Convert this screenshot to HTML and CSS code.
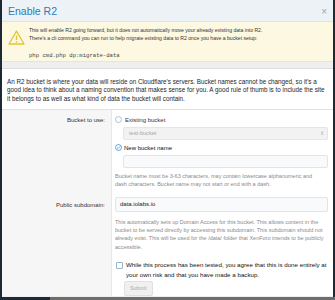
FILE: index.html
```html
<!DOCTYPE html>
<html lang="en">
<head>
    <meta charset="UTF-8">
    <title>Enable R2</title>
    <link rel="stylesheet" href="styles.css">
</head>
<body>
<div class="overlay">
    <div class="modal">
        <div class="modal-title">
            <span>Enable R2</span>
            <span class="close">&times;</span>
        </div>

        <div class="notice">
            <svg class="notice-icon" width="17" height="15" viewBox="0 0 17 15">
                <path d="M8.5 1.2 L16 14 L1 14 Z" fill="none" stroke="#e3c437" stroke-width="1.3" stroke-linejoin="round"/>
                <path d="M8.5 5.5 V10" stroke="#e3c437" stroke-width="1.4"/>
                <circle cx="8.5" cy="11.9" r="0.8" fill="#e3c437"/>
            </svg>
            <div class="notice-text">
                <p>This will enable R2 going forward, but it does not automatically move your already existing data into R2.<br>There's a cli command you can run to help migrate existing data to R2 once you have a bucket setup:</p>
                <code>php cmd.php dp:migrate-data</code>
            </div>
        </div>

        <div class="block">
            <p class="intro">An R2 bucket is where your data will reside on Cloudflare's servers. Bucket names cannot be changed, so it's a good idea to think about a naming convention that makes sense for you. A good rule of thumb is to include the site it belongs to as well as what kind of data the bucket will contain.</p>

            <div class="form-row">
                <div class="row-label">Bucket to use:</div>
                <div class="row-input">
                    <label class="choice">
                        <span class="radio"></span> Existing bucket
                    </label>
                    <div class="select">
                        <span>test-bucket</span>
                        <span class="arrows">&#8661;</span>
                    </div>
                    <label class="choice choice-on">
                        <svg class="radio-on" width="7" height="7" viewBox="0 0 7 7">
                            <circle cx="3.5" cy="3.5" r="3" fill="#fff" stroke="#3c8dd0" stroke-width="0.8"/>
                            <path d="M2 3.6 L3.1 4.6 L5 2.5" fill="none" stroke="#3c8dd0" stroke-width="0.8"/>
                        </svg>
                        New bucket name
                    </label>
                    <div class="text-input indented"></div>
                    <p class="hint indented hint-name">Bucket name must be 3-63 characters, may contain lowercase alphanumeric and dash characters. Bucket name may not start or end with a dash.</p>
                </div>
            </div>

            <div class="form-row">
                <div class="row-label label-low">Public subdomain:</div>
                <div class="row-input row-sub">
                    <div class="text-input filled">data.iolabs.io</div>
                    <p class="hint hint-sub">This automatically sets up Domain Access for this bucket. This allows content in the bucket to be served directly by accessing this subdomain. This subdomain should not already exist. This will be used for the /data/ folder that XenForo intends to be publicly accessible.</p>
                </div>
            </div>

            <div class="form-row">
                <div class="row-label"></div>
                <div class="row-input row-agree">
                    <label class="agree">
                        <span class="checkbox"></span>
                        <span>While this process has been tested, you agree that this is done entirely at your own risk and that you have made a backup.</span>
                    </label>
                </div>
            </div>

            <div class="form-row submit-row">
                <div class="row-label"></div>
                <div class="row-input">
                    <button class="submit">Submit</button>
                </div>
            </div>
        </div>
    </div>
    <div class="page-strip">
        <span class="strip-dark"></span>
        <span class="strip-grey"></span>
    </div>
</div>
</body>
</html>
```

FILE: styles.css
```css
body {
    margin: 0;
    background-color: #1d2935;
    font-family: "Liberation Sans", Arial, sans-serif;
    color: #1e1e1e;
}
.overlay {
    width: 335px;
    height: 300px;
    overflow: hidden;
}
.modal {
    margin: 0 2px;
    height: 297px;
    overflow: hidden;
    background-color: #efefef;
}
.modal-title {
    height: 22px;
    display: flex;
    align-items: center;
    justify-content: space-between;
    padding: 0 6px 0 6px;
    background-color: #edf2f7;
    border-bottom: 1px solid #dbe3ec;
    color: #2f7ab8;
    font-size: 10.5px;
    box-sizing: border-box;
}
.close {
    color: #92aac0;
    font-size: 10px;
    padding-top: 2px;
}
.notice {
    display: flex;
    height: 40px;
    box-sizing: border-box;
    padding: 4px 6px 0 6px;
    background-color: #fcf8e1;
    border-bottom: 1px solid #ece6c4;
    margin-bottom: 6px;
}
.notice-icon {
    margin: 4px 4px 0 0;
    flex: none;
}
.notice-text p {
    margin: 0;
    font-size: 5.1px;
    line-height: 8px;
    color: #333;
}
.notice-text code {
    display: block;
    margin-top: 10px;
    font-family: "Liberation Mono", monospace;
    font-size: 5.6px;
    color: #444;
}
.block {
    background-color: #fff;
    border-top: 1px solid #dddddd;
}
.intro {
    margin: 0;
    padding: 8.5px 6px 5px 5px;
    font-size: 6.3px;
    line-height: 8.7px;
    border-bottom: 1px solid #e2e2e2;
}
.form-row {
    display: grid;
    grid-template-columns: 110px 1fr;
}
.row-label {
    background-color: #f6f6f6;
    border-right: 1px solid #e8e8e8;
    text-align: right;
    padding: 6px 6px 0 0;
    font-size: 6px;
    line-height: 8px;
    color: #333;
}
.label-low {
    padding-top: 12px;
}
.row-input {
    padding: 6px 5px 0 3px;
    font-size: 6px;
}
.row-sub {
    padding-top: 8px;
}
.row-agree {
    padding-top: 9px;
}
.choice {
    display: flex;
    align-items: center;
    height: 8px;
    color: #333;
}
.choice-on {
    color: #111;
    margin-top: 4px;
}
.radio {
    width: 5px;
    height: 5px;
    border: 1px solid #a9c2d8;
    border-radius: 50%;
    margin-right: 3px;
}
.radio-on {
    margin-right: 2px;
}
.indented {
    margin-left: 8px;
}
.select {
    margin: 3px 0 0 8px;
    height: 13px;
    box-sizing: border-box;
    display: flex;
    align-items: center;
    justify-content: space-between;
    padding: 0 3px 0 5px;
    background-color: #f2f2f2;
    border: 1px solid #e5e5e5;
    border-radius: 2px;
    color: #a7a7a7;
    font-size: 5.6px;
}
.arrows {
    font-size: 5px;
    color: #aaa;
}
.text-input {
    height: 13px;
    margin-top: 3px;
    border: 1px solid #dfe5eb;
    border-radius: 2px;
    background-color: #f8fafc;
    box-sizing: border-box;
}
.filled {
    display: flex;
    align-items: center;
    margin-top: 0;
    padding-left: 4px;
    color: #222;
    font-size: 6px;
    height: 15px;
}
.hint {
    margin: 4px 0 0 0;
    font-size: 5.5px;
    line-height: 8.5px;
    color: #8a8a8a;
}
.hint-name {
    padding-right: 14px;
}
.hint-sub {
    margin-top: 6px;
    line-height: 8.3px;
}
.agree {
    display: flex;
    align-items: flex-start;
    font-size: 6.2px;
    line-height: 10px;
    color: #111;
}
.checkbox {
    flex: none;
    width: 5px;
    height: 5px;
    border: 1px solid #9bb3c8;
    border-radius: 1px;
    margin: 2px 3px 0 1px;
}
.submit-row .row-input {
    padding: 1px 0 0 12px;
}
.submit {
    height: 15px;
    padding: 0 5px;
    border: 1px solid #e0e0e0;
    border-radius: 2px;
    background-color: #f0f0f0;
    color: #a9a9a9;
    font-family: "Liberation Sans", Arial, sans-serif;
    font-size: 5.4px;
}
.page-strip {
    display: flex;
    height: 3px;
}
.strip-dark {
    width: 50px;
    background-color: #1d2935;
}
.strip-grey {
    flex: 1;
    background-color: #6d6d6d;
}
```
